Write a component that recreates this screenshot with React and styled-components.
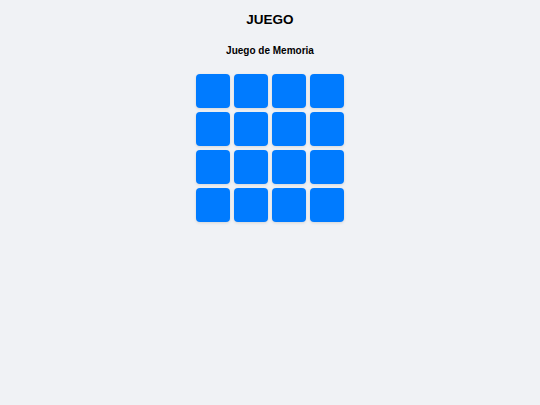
import styled, { createGlobalStyle } from "styled-components";

const GlobalStyle = createGlobalStyle`
    body {
        margin: 0;
        background: #f0f2f5;
        font-family: "Liberation Sans", Arial, sans-serif;
        color: #000000;
    }
`;

export default function App() {
    const cards = Array.from({ length: 16 }, (_, i) => i);

    return (
        <>
            <GlobalStyle />
            <Page>
                <Title>JUEGO</Title>
                <Subtitle>Juego de Memoria</Subtitle>
                <Board>
                    {cards.map(c => (
                        <Card key={c} />
                    ))}
                </Board>
            </Page>
        </>
    );
}

const Page = styled.div`
    width: 540px;
    height: 405px;
    display: flex;
    flex-direction: column;
    align-items: center;
    padding-top: 12px;
    box-sizing: border-box;
`;

const Title = styled.h1`
    margin: 0;
    font-size: 13.5px;
    font-weight: 700;
    line-height: 16px;
`;

const Subtitle = styled.h2`
    margin: 17px 0 0;
    font-size: 10px;
    font-weight: 700;
    line-height: 12px;
`;

const Board = styled.div`
    margin-top: 17px;
    display: grid;
    grid-template-columns: repeat(4, 34px);
    grid-auto-rows: 34px;
    gap: 4px;
`;

const Card = styled.div`
    background: #007bff;
    border-radius: 4px;
    box-shadow: 0 1px 3px rgba(0, 0, 0, 0.12);
`;
